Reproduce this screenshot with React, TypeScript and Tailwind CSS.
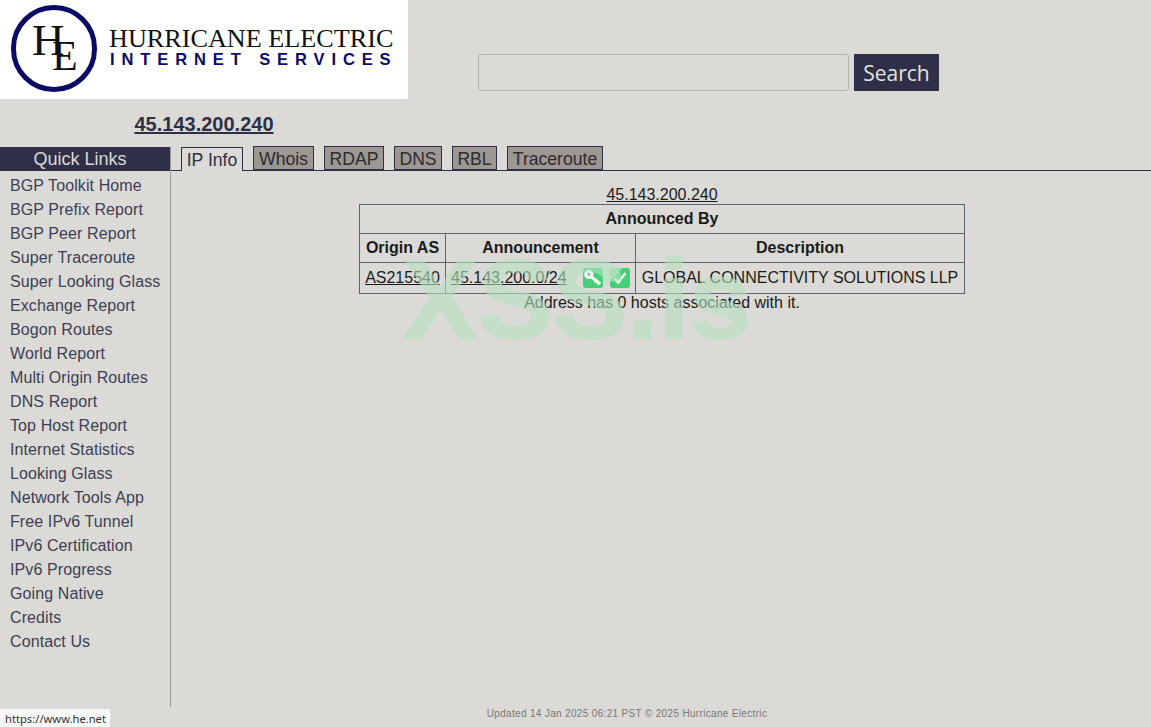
const quickLinks = [
  "BGP Toolkit Home",
  "BGP Prefix Report",
  "BGP Peer Report",
  "Super Traceroute",
  "Super Looking Glass",
  "Exchange Report",
  "Bogon Routes",
  "World Report",
  "Multi Origin Routes",
  "DNS Report",
  "Top Host Report",
  "Internet Statistics",
  "Looking Glass",
  "Network Tools App",
  "Free IPv6 Tunnel",
  "IPv6 Certification",
  "IPv6 Progress",
  "Going Native",
  "Credits",
  "Contact Us",
];

const tabs = [
  { label: "Whois", width: "w-[61px]" },
  { label: "RDAP", width: "w-[60px]" },
  { label: "DNS", width: "w-[48px]" },
  { label: "RBL", width: "w-[45px]" },
  { label: "Traceroute", width: "w-[96px]" },
];

function Logo() {
  return (
    <div className="flex h-[99px] w-[408px] items-start bg-white pl-[11px] pt-[5px]">
      <div className="relative h-[87px] w-[86px] shrink-0 rounded-full border-[5px] border-[#0b0b66] font-['Liberation_Serif',serif] text-[#111]">
        <span className="absolute left-[16px] top-[2px] text-[45px] leading-[56px]">H</span>
        <span className="absolute left-[36px] top-[18px] text-[42px] leading-[56px]">E</span>
      </div>
      <div className="ml-[12px] flex flex-col pt-[21px]">
        <span className="whitespace-nowrap font-['Liberation_Serif',serif] text-[26.2px] leading-[26px] text-[#111]">
          HURRICANE ELECTRIC
        </span>
        <span className="whitespace-nowrap pl-[1px] font-['Liberation_Sans',sans-serif] text-[16.5px] leading-[14px] font-bold tracking-[6.9px] text-[#0b0b66]">
          INTERNET SERVICES
        </span>
      </div>
    </div>
  );
}

function KeyIcon() {
  return (
    <svg width="20" height="20" viewBox="0 0 20 20">
      <rect width="20" height="20" rx="3" fill="#45cf76" />
      <circle cx="5.8" cy="6.4" r="3" fill="none" stroke="#fff" strokeWidth="3.2" />
      <path d="M8.5 9l8.8 7" fill="none" stroke="#fff" strokeWidth="3" />
      <path d="M13.6 12.6l-1.6 2M16 14.6l-1.6 2" fill="none" stroke="#fff" strokeWidth="2" />
    </svg>
  );
}

function CheckIcon() {
  return (
    <svg width="20" height="20" viewBox="0 0 20 20">
      <rect width="20" height="20" rx="3" fill="#45cf76" />
      <path d="M0 3a3 3 0 0 1 3-3h10L0 13z" fill="#8fdfa9" />
      <path d="M4.5 10.5l3.8 4L15.5 5" fill="none" stroke="#e6f7ea" strokeWidth="2.6" />
    </svg>
  );
}

export default function App() {
  return (
    <div className="relative h-[727px] w-full overflow-hidden bg-[#dbdad6] font-['Liberation_Sans',sans-serif] text-[16px] text-[#1a1a1a]">
      {/* Header */}
      <div className="flex h-[99px]">
        <Logo />
        <div className="ml-[70px] mt-[54px] flex h-[37px] gap-[5px]">
          <input className="h-[37px] w-[371px] rounded-[3px] border border-[#b5b5b0] bg-[#dbdad6]" />
          <button className="h-[37px] w-[85px] bg-[#2f3047] pt-[2px] font-['Open_Sans',sans-serif] text-[21px] text-[#e4e4e0]">
            Search
          </button>
        </div>
      </div>

      <div className="flex h-[48px] w-[408px] justify-center pt-[13px]">
        <a className="text-[20px] leading-[24px] font-bold text-[#2f3047] underline">45.143.200.240</a>
      </div>

      <div className="flex">
        {/* Sidebar */}
        <div className="flex h-[560px] w-[171px] shrink-0 flex-col border-r border-[#9a9a96]">
          <div className="h-[24px] w-[170px] bg-[#2f3047] pr-[10px] text-center text-[18px] leading-[24px] text-[#dbdad6]">
            Quick Links
          </div>
          <div className="flex flex-col pt-[3px] pl-[10px]">
            {quickLinks.map((link) => (
              <a key={link} className="h-[24px] leading-[24px] tracking-[0.1px] whitespace-nowrap text-[#3d3e55]">
                {link}
              </a>
            ))}
          </div>
        </div>

        {/* Content */}
        <div className="flex-1">
          <div className="flex h-[24px] items-end gap-[10px] border-b border-[#2f3047] pl-[10px] text-[17.6px]">
            <div className="relative top-[1px] h-[24px] w-[62px] border border-b-0 border-[#2f3047] bg-[#dbdad6] text-center leading-[25px] whitespace-nowrap text-[#2f3047]">
              IP Info
            </div>
            {tabs.map((tab) => (
              <div
                key={tab.label}
                className={`${tab.width} h-[24px] border border-[#2f3047] bg-[#9c9791] text-center leading-[25px] text-[#2f2a33]`}
              >
                {tab.label}
              </div>
            ))}
          </div>

          <div className="flex flex-col items-center pt-[14px] pl-[2px]">
            <a className="h-[19px] leading-[20px] text-[#1a1a1a] underline">45.143.200.240</a>
            <table className="w-[606px] border-collapse border border-[#5b6670] text-[#1a1a1a]">
              <tbody>
                <tr>
                  <th colSpan={3} className="h-[29px] border border-[#5b6670] p-0 font-bold">
                    Announced By
                  </th>
                </tr>
                <tr>
                  <th className="h-[29px] w-[86px] border border-[#5b6670] p-0 font-bold">Origin AS</th>
                  <th className="w-[190px] border border-[#5b6670] p-0 font-bold">Announcement</th>
                  <th className="border border-[#5b6670] p-0 font-bold">Description</th>
                </tr>
                <tr>
                  <td className="h-[31px] border border-[#5b6670] p-0 text-center">
                    <a className="underline">AS215540</a>
                  </td>
                  <td className="border border-[#5b6670] p-0 pl-[5px]">
                    <div className="flex items-center justify-between pr-[5px]">
                      <a className="underline">45.143.200.0/24</a>
                      <div className="flex gap-[7px]">
                        <KeyIcon />
                        <CheckIcon />
                      </div>
                    </div>
                  </td>
                  <td className="border border-[#5b6670] p-0 text-center whitespace-nowrap">
                    GLOBAL CONNECTIVITY SOLUTIONS LLP
                  </td>
                </tr>
              </tbody>
            </table>
            <p className="h-[18px] leading-[18px]">Address has 0 hosts associated with it.</p>
          </div>
        </div>
      </div>

      <div className="w-[1254px] text-center text-[10px] leading-[14px] tracking-[0.33px] text-[#777]">
        Updated 14 Jan 2025 06:21 PST © 2025 Hurricane Electric
      </div>

      {/* Watermark */}
      <div className="pointer-events-none absolute top-[240px] left-[403px] text-[112px] leading-[120px] font-bold text-[#b5e2c0] opacity-60 [-webkit-text-stroke:2px_#b5e2c0]">
        XSS.is
      </div>

      {/* Browser status bubble */}
      <div className="absolute bottom-0 left-0 h-[18px] w-[110px] bg-[#f8f8f8] pl-[5px] font-['Noto_Sans',sans-serif] text-[11.2px] leading-[20px] text-[#333]">
        https://www.he.net
      </div>
    </div>
  );
}
